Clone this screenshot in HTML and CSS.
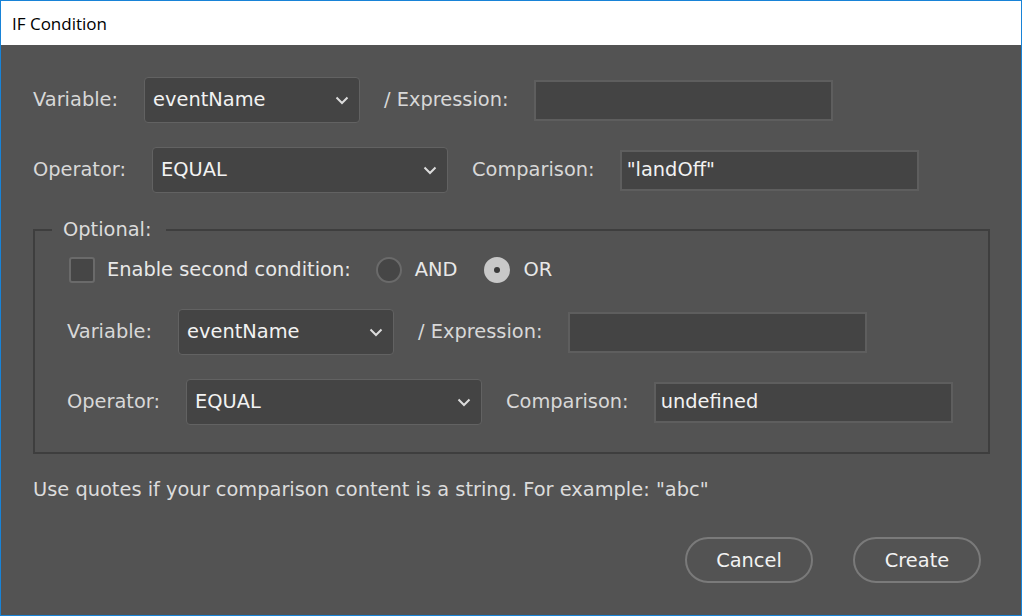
FILE: index.html
```html
<!DOCTYPE html>
<html>
<head>
<meta charset="utf-8">
<title>IF Condition</title>
<link rel="stylesheet" href="styles.css">
</head>
<body>
<div class="window">
  <div class="titlebar">IF Condition</div>
  <div class="content">
    <div class="row">
      <span class="label">Variable:</span>
      <div class="select w-short"><span>eventName</span><svg class="chev" width="14" height="9" viewBox="0 0 14 9"><path d="M1.5 1.5 L7 7 L12.5 1.5" fill="none" stroke="#dcdcdc" stroke-width="2"/></svg></div>
      <span class="label mid">/ Expression:</span>
      <div class="input"></div>
    </div>
    <div class="row">
      <span class="label">Operator:</span>
      <div class="select w-long"><span>EQUAL</span><svg class="chev" width="14" height="9" viewBox="0 0 14 9"><path d="M1.5 1.5 L7 7 L12.5 1.5" fill="none" stroke="#dcdcdc" stroke-width="2"/></svg></div>
      <span class="label mid">Comparison:</span>
      <div class="input">"landOff"</div>
    </div>

    <fieldset class="optional">
      <legend>Optional:</legend>
      <div class="checkrow">
        <span class="checkbox"></span>
        <span class="check-label">Enable second condition:</span>
        <span class="radio"></span>
        <span class="radio-label">AND</span>
        <span class="radio checked"></span>
        <span class="radio-label">OR</span>
      </div>
      <div class="row">
        <span class="label">Variable:</span>
        <div class="select w-short"><span>eventName</span><svg class="chev" width="14" height="9" viewBox="0 0 14 9"><path d="M1.5 1.5 L7 7 L12.5 1.5" fill="none" stroke="#dcdcdc" stroke-width="2"/></svg></div>
        <span class="label mid">/ Expression:</span>
        <div class="input"></div>
      </div>
      <div class="row">
        <span class="label">Operator:</span>
        <div class="select w-long"><span>EQUAL</span><svg class="chev" width="14" height="9" viewBox="0 0 14 9"><path d="M1.5 1.5 L7 7 L12.5 1.5" fill="none" stroke="#dcdcdc" stroke-width="2"/></svg></div>
        <span class="label mid">Comparison:</span>
        <div class="input">undefined</div>
      </div>
    </fieldset>

    <p class="note">Use quotes if your comparison content is a string. For example: "abc"</p>

    <div class="buttons">
      <button class="btn">Cancel</button>
      <button class="btn">Create</button>
    </div>
  </div>
</div>
</body>
</html>
```
FILE: styles.css
```css
html, body {
  margin: 0;
  padding: 0;
  background: #535353;
}

.window {
  width: 1022px;
  height: 616px;
  box-sizing: border-box;
  border: 1px solid #1883d7;
  display: flex;
  flex-direction: column;
  background: #535353;
  overflow: hidden;
}

.titlebar {
  flex: none;
  height: 44px;
  background: #ffffff;
  display: flex;
  align-items: center;
  padding-left: 11px;
  font-family: "Open Sans", "Noto Sans", sans-serif;
  font-size: 17px;
  color: #000000;
}

.content {
  flex: 1;
  padding: 32px 31px 0 32px;
  font-family: "DejaVu Sans", Verdana, sans-serif;
  font-size: 19.4px;
  line-height: 24px;
  color: #d8d8d8;
}

.row {
  display: flex;
  align-items: center;
  height: 46px;
}

.row + .row {
  margin-top: 24px;
}

.label {
  margin-right: 26px;
  white-space: nowrap;
}

.label.mid {
  margin-left: 24px;
  margin-right: 25px;
}

.select {
  height: 46px;
  box-sizing: border-box;
  border: 1px solid #626262;
  border-radius: 4px;
  background: #444444;
  display: flex;
  align-items: center;
  justify-content: space-between;
  padding: 0 10px 0 8px;
  color: #f2f2f2;
}

.w-short { width: 216px; }
.w-long { width: 296px; }

.chev {
  display: block;
}

.input {
  width: 299px;
  height: 41px;
  box-sizing: border-box;
  border: 2px solid #5e5e5e;
  background: #444444;
  padding-left: 5px;
  display: flex;
  align-items: center;
  color: #f2f2f2;
  white-space: nowrap;
}

.optional {
  margin: 25px 0 0 0;
  padding: 0 0 27px 32px;
  border: 2px solid #3e3e3e;
  min-width: 0;
}

.optional legend {
  margin-left: -15px;
  padding: 0 14px 0 11px;
  line-height: 24px;
  color: #dcdcdc;
}

.checkrow {
  margin-top: 15px;
  height: 26px;
  display: flex;
  align-items: center;
  padding-left: 2px;
  color: #e8e8e8;
}

.optional .checkrow + .row {
  margin-top: 26px;
}

.checkbox {
  width: 26px;
  height: 26px;
  box-sizing: border-box;
  border: 2px solid #6a6a6a;
  border-radius: 3px;
  background: #464646;
  margin-right: 12px;
}

.check-label {
  margin-right: 25px;
}

.radio {
  width: 26px;
  height: 26px;
  box-sizing: border-box;
  border: 2px solid #6a6a6a;
  border-radius: 50%;
  background: #464646;
  margin-right: 13px;
  display: flex;
  align-items: center;
  justify-content: center;
}

.radio.checked {
  border-color: #c8c8c8;
  background: #c8c8c8;
}

.radio.checked::after {
  content: "";
  width: 6px;
  height: 6px;
  border-radius: 50%;
  background: #3a3a3a;
}

.radio-label {
  margin-right: 27px;
}

.note {
  margin: 24px 0 0 0;
  line-height: 24px;
  color: #dcdcdc;
}

.buttons {
  display: flex;
  justify-content: flex-end;
  gap: 40px;
  margin-top: 35px;
  padding-right: 9px;
}

.btn {
  width: 128px;
  height: 46px;
  box-sizing: border-box;
  border: 2px solid #7a7a7a;
  border-radius: 23px;
  background: transparent;
  color: #f2f2f2;
  font-family: "DejaVu Sans", Verdana, sans-serif;
  font-size: 19.4px;
  padding: 0;
}
```
